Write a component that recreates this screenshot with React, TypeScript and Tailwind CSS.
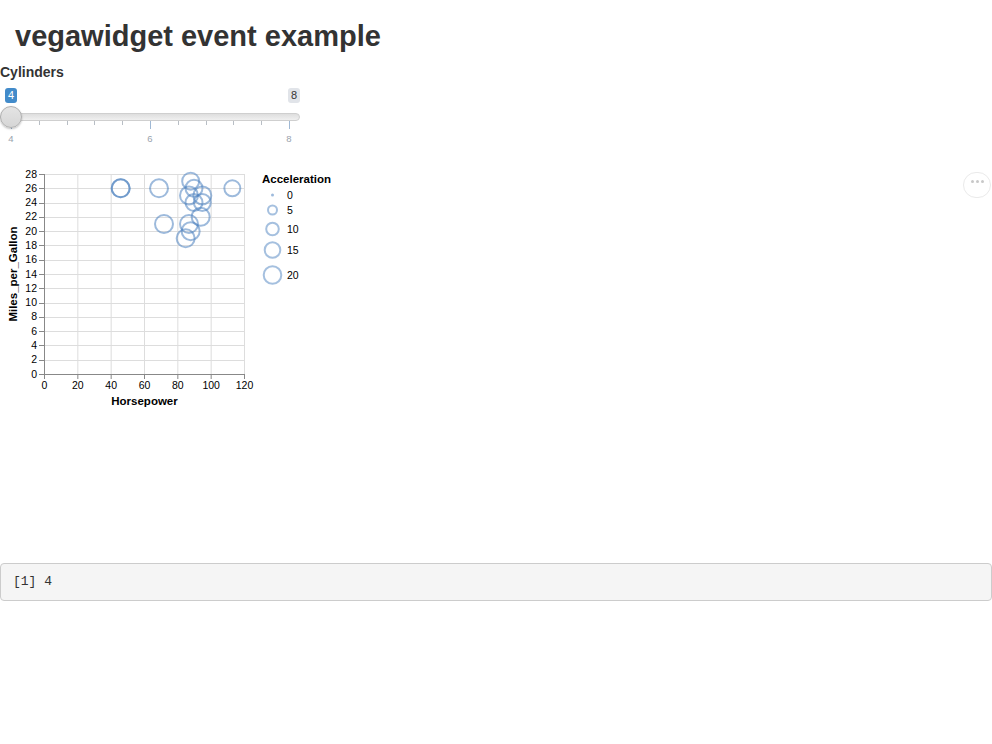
import React from "react";

const X = (hp: number) => 44 + (hp * 200) / 120;
const Y = (mpg: number) => 214 - (mpg * 200) / 28;

const points: [number, number, number][] = [
  [46, 26, 9],
  [46, 26, 9],
  [69, 26, 9],
  [88, 27, 8.5],
  [90, 26, 8.5],
  [113, 26, 8],
  [87, 25, 9],
  [95, 25, 9],
  [90, 24, 8.5],
  [95, 24, 8.5],
  [94, 22, 9],
  [72, 21, 9],
  [87, 21, 9],
  [88, 20, 9],
  [85, 19, 9],
];

const yTicks = Array.from({ length: 15 }, (_, i) => i * 2);
const xTicks = [0, 20, 40, 60, 80, 100, 120];
const legend: [string, number, number][] = [
  ["0", 35, 1.5],
  ["5", 50, 4.5],
  ["10", 69, 6.3],
  ["15", 90, 7.8],
  ["20", 115, 8.8],
];

const BLUE = "#4c82c0";

function Chart() {
  return (
    <svg width={340} height={250} className="block" style={{ fontFamily: '"Liberation Sans", Arial, sans-serif' }}>
      {xTicks.map((t) => (
        <line key={"gx" + t} x1={X(t) + 0.5} x2={X(t) + 0.5} y1={14} y2={214} stroke="#ddd" strokeWidth={1} />
      ))}
      {yTicks.map((t) => (
        <line key={"gy" + t} x1={44} x2={244} y1={Math.round(Y(t)) + 0.5} y2={Math.round(Y(t)) + 0.5} stroke="#ddd" strokeWidth={1} />
      ))}
      <line x1={44.5} x2={44.5} y1={14} y2={214.5} stroke="#888" />
      {yTicks.map((t) => (
        <g key={"yt" + t}>
          <line x1={39} x2={44} y1={Math.round(Y(t)) + 0.5} y2={Math.round(Y(t)) + 0.5} stroke="#888" />
          <text x={37} y={Y(t) + 3.5} fontSize={10.5} textAnchor="end" fill="#000">
            {t}
          </text>
        </g>
      ))}
      <line x1={44} x2={244.5} y1={214.5} y2={214.5} stroke="#888" />
      {xTicks.map((t) => (
        <g key={"xt" + t}>
          <line x1={X(t) + 0.5} x2={X(t) + 0.5} y1={214} y2={219} stroke="#888" />
          <text x={X(t) + 0.5} y={228.5} fontSize={10.5} textAnchor="middle" fill="#000">
            {t}
          </text>
        </g>
      ))}
      <text x={144.5} y={245} fontSize={11.5} fontWeight="bold" textAnchor="middle" fill="#000">
        Horsepower
      </text>
      <text
        x={0}
        y={0}
        fontSize={11.5}
        fontWeight="bold"
        textAnchor="middle"
        fill="#000"
        transform="translate(17 114) rotate(-90)"
      >
        Miles_per_Gallon
      </text>
      {points.map(([hp, mpg, r], i) => (
        <circle key={"p" + i} cx={X(hp)} cy={Y(mpg)} r={r} fill="none" stroke={BLUE} strokeWidth={2} opacity={0.55} />
      ))}
      <text x={262} y={22.5} fontSize={11.5} fontWeight="bold" fill="#000">
        Acceleration
      </text>
      {legend.map(([label, cy, r]) => (
        <g key={"l" + label}>
          {r < 2 ? (
            <circle cx={272.5} cy={cy} r={r} fill={BLUE} opacity={0.55} />
          ) : (
            <circle cx={272.5} cy={cy} r={r} fill="none" stroke={BLUE} strokeWidth={2} opacity={0.5} />
          )}
          <text x={287} y={cy + 3.5} fontSize={10.5} fill="#000">
            {label}
          </text>
        </g>
      ))}
    </svg>
  );
}

const ticks = Array.from({ length: 11 }, (_, i) => i);

function Slider() {
  return (
    <div className="flex w-[300px] flex-col">
      <div className="mt-[6px] flex h-[15px] justify-between pl-[5px]">
        <span className="h-[15px] w-[12px] rounded-[3px] bg-[#428bca] text-center text-[11px] leading-[15px] text-white">4</span>
        <span className="h-[15px] w-[12px] rounded-[3px] bg-[#e1e4e9] text-center text-[11px] leading-[15px] text-[#333]">8</span>
      </div>
      <div className="relative mt-[10px] h-[8px] w-[300px] rounded-full border border-[#cfcfcf] bg-gradient-to-b from-[#dedede] to-[#f0f0f0]">
        <div className="absolute left-[-1px] top-[-8px] h-[22px] w-[22px] rounded-full border border-[#b0b0b0] bg-gradient-to-b from-[#e4e4e4] to-[#d6d6d6] shadow-[0_1px_2px_rgba(0,0,0,0.25)]" />
      </div>
      <div className="flex h-[8px] w-[290px] items-start justify-between pl-[11px]">
        {ticks.map((i) =>
          i % 5 === 0 ? (
            <span key={i} className="h-[8px] w-px bg-[#9fb8d4]" />
          ) : (
            <span key={i} className="h-[4px] w-px bg-[#b8bec5]" />
          )
        )}
      </div>
      <div className="mt-[4px] flex w-[300px] justify-between pl-[1px] pr-[1px]">
        {["4", "6", "8"].map((l) => (
          <span key={l} className="w-[20px] text-center text-[9.5px] leading-[12px] text-[#99a2ad]">
            {l}
          </span>
        ))}
      </div>
    </div>
  );
}

export default function App() {
  return (
    <div className="flex h-[744px] w-[992px] flex-col bg-white font-['Liberation_Sans',Arial,sans-serif] text-[#333]">
      <h1 className="mt-[20px] h-[33px] pl-[15px] text-[29px] leading-[33px] font-bold">vegawidget event example</h1>
      <div className="mt-[9px] text-[14px] leading-[20px] font-bold">Cylinders</div>
      <Slider />
      <div className="relative mt-[15px] h-[250px]">
        <Chart />
        <div className="absolute right-[1px] top-[12px] flex h-[26px] w-[28px] items-start justify-center gap-[2px] rounded-full border border-[#eaeaea] bg-white pt-[7px]">
          <span className="h-[3px] w-[3px] rounded-full bg-[#c8c8c8]" />
          <span className="h-[3px] w-[3px] rounded-full bg-[#c8c8c8]" />
          <span className="h-[3px] w-[3px] rounded-full bg-[#c8c8c8]" />
        </div>
      </div>
      <div className="mt-[153px] flex h-[38px] w-[992px] items-center rounded-[4px] border border-[#ccc] bg-[#f5f5f5] px-[12px] font-['Liberation_Mono',monospace] text-[13px] text-[#333]">
        [1] 4
      </div>
    </div>
  );
}
